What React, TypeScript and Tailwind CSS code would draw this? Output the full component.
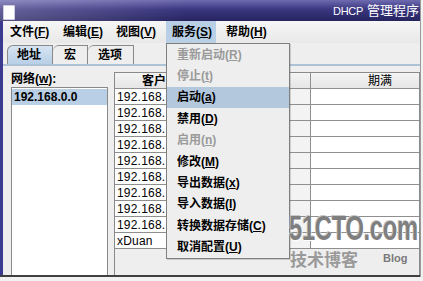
const rows = [
  '192.168.', '192.168.', '192.168.', '192.168.', '192.168.',
  '192.168.', '192.168.', '192.168.', '192.168.', 'xDuan',
];

const menus = [
  { label: '文件', key: 'F', w: 'w-[53px] pl-[6px]' },
  { label: '编辑', key: 'E', w: 'w-[53px] pl-[6px]' },
  { label: '视图', key: 'V', w: 'w-[56px] pl-[6px]' },
  { label: '服务', key: 'S', w: 'w-[50px] pl-[6px]', open: true },
  { label: '帮助', key: 'H', w: 'w-[60px] pl-[10px]' },
];

const serviceItems = [
  { label: '重新启动', key: 'R', disabled: true },
  { label: '停止', key: 't', disabled: true },
  { label: '启动', key: 'a', active: true },
  { label: '禁用', key: 'D' },
  { label: '启用', key: 'n', disabled: true },
  { label: '修改', key: 'M' },
  { label: '导出数据', key: 'x' },
  { label: '导入数据', key: 'I' },
  { label: '转换数据存储', key: 'C' },
  { label: '取消配置', key: 'U' },
];

function Mnemonic({ label, k }: { label: string; k: string }) {
  return (
    <span className="whitespace-nowrap">
      {label}(<u>{k}</u>)
    </span>
  );
}

export default function App() {
  return (
    <div className="relative w-[423px] h-[281px] overflow-hidden bg-[#f2f2f2] text-[12px] text-black font-['Liberation_Sans','Noto_Sans_CJK_SC',sans-serif]">
      <div className="w-[421px] h-[277px] flex flex-col border-r border-[#9a9a9a]">
        {/* Title bar */}
        <div className="h-[21px] shrink-0 flex items-center justify-between bg-[linear-gradient(90deg,rgba(255,255,255,0.22),rgba(255,255,255,0)_45%),linear-gradient(180deg,#6f6bb0_0%,#3a3680_45%,#26245f_100%)]">
          <div className="ml-[3px] mt-[3px] w-[12px] h-[15px] bg-white border border-[#cfcfe0] rounded-[1px]" />
          <div className="flex items-baseline gap-[4px] text-white pr-[1px]">
            <span className="text-[11px] tracking-[-0.3px]">DHCP</span>
            <span className="text-[13px]">管理程序</span>
          </div>
        </div>

        <div className="flex-1 flex min-h-0">
          {/* left frame edge */}
          <div className="w-[3px] bg-[#3b3a8e]" />

          <div className="flex-1 min-w-0 flex flex-col bg-[#eeeeee]">
            {/* Menu bar */}
            <div className="h-[22px] shrink-0 flex pl-[1px] bg-[linear-gradient(180deg,#f6f6f6,#e8e8e8)] font-bold">
              {menus.map((m) => (
                <div
                  key={m.label}
                  className={`${m.w} h-full flex items-center ${m.open ? 'bg-[#b8cfe5]' : ''}`}
                >
                  <Mnemonic label={m.label} k={m.key} />
                </div>
              ))}
            </div>

            {/* Tabs */}
            <div className="h-[21px] shrink-0 flex items-end pl-[4px] font-bold">
              <div className="w-[46px] h-[19px] flex items-center pl-[9px] border border-b-0 border-[#8a8a8a] rounded-tl-[6px] bg-[linear-gradient(180deg,#d6e4f2,#b8cfe5)]">
                地址
              </div>
              <div className="w-[35px] h-[19px] flex items-center pl-[11px] border border-b-0 border-l-0 border-[#8a8a8a] rounded-tl-[6px] bg-[#eeeeee]">
                宏
              </div>
              <div className="w-[46px] h-[19px] flex items-center pl-[10px] border border-b-0 border-l-0 border-[#8a8a8a] rounded-tl-[6px] bg-[#eeeeee]">
                选项
              </div>
            </div>

            {/* Panel */}
            <div className="flex-1 min-h-0 flex gap-[6px] pl-[8px] pt-[6px] border-t-2 border-[#adc2d6]">
              {/* Networks list */}
              <div className="w-[97px] flex flex-col">
                <div className="h-[15px] leading-[15px] font-bold">
                  网络(<u>w</u>):
                </div>
                <div className="flex-1 bg-white border border-b-0 border-[#8a8a8a]">
                  <div className="h-[16px] mt-[1px] flex items-center pl-[2px] bg-[#b8cfe5] font-bold">
                    192.168.0.0
                  </div>
                </div>
              </div>

              {/* Clients table */}
              <div className="flex-1 flex flex-col border border-b-0 border-[#8a8a8a] bg-[#eeeeee]">
                <div className="h-[16px] shrink-0 flex border-b border-[#8f8f8f] bg-[linear-gradient(180deg,#f4f4f4,#e6e6e6)]">
                  <div className="w-[96px] pl-[27px] font-bold flex items-center border-r border-[#8f8f8f]">
                    客户端
                  </div>
                  <div className="w-[100px] flex items-center justify-center border-r border-[#8f8f8f]">
                    租约
                  </div>
                  <div className="flex-1 pl-[57px] flex items-center">期满</div>
                </div>
                {rows.map((r, i) => (
                  <div key={i} className="h-[16px] shrink-0 flex border-b border-[#8f8f8f]">
                    <div className="w-[96px] pl-[2px] flex items-center bg-white border-r border-[#8f8f8f] tracking-[0.2px]">
                      {r}
                    </div>
                    <div className="w-[100px] bg-[#f3f3f3] border-r border-[#8f8f8f]" />
                    <div className="flex-1 bg-white" />
                  </div>
                ))}
              </div>
            </div>
          </div>
        </div>

        <div className="h-[2px] shrink-0 bg-[#404040]" />
      </div>

      {/* Open 服务 menu */}
      <div className="absolute left-[166px] top-[43px] w-[124px] border border-[#7f7f7f] bg-[#eeeeee] font-bold shadow-[1px_1px_0_rgba(0,0,0,0.15)]">
        {serviceItems.map((it) => (
          <div
            key={it.label}
            className={`h-[21.4px] flex items-center pl-[10px] ${it.active ? 'bg-[#b3c8dd]' : ''} ${it.disabled ? 'text-[#9a9a9a]' : 'text-black'}`}
          >
            <Mnemonic label={it.label} k={it.key} />
          </div>
        ))}
      </div>

      {/* Watermark */}
      <div className="absolute left-[289px] top-[207px] origin-left scale-x-[0.68] text-[35px] leading-[42px] font-bold text-[#7f7f7f] tracking-[-0.5px] [text-shadow:1px_1px_0_#ffffff,-1px_-1px_0_#c8c8c8]">
        51CTO.com
      </div>
      <div className="absolute left-[290px] top-[249px] text-[17px] leading-[24px] text-[#9a9a9a] font-bold">
        技术博客
      </div>
      <div className="absolute left-[383px] top-[251px] text-[11px] leading-[14px] text-[#7a7a7a] font-bold">
        Blog
      </div>
    </div>
  );
}
